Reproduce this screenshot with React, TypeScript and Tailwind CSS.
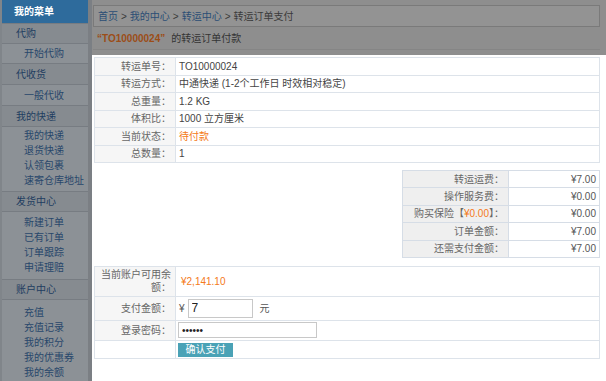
const font = "font-['Liberation_Sans','Noto_Sans_CJK_SC',sans-serif]";

function SideSection({ title, h = 20 }: { title: string; h?: number }) {
  return (
    <div
      className="flex items-center pl-[14px] bg-[#868b90] border-b border-[#777c82] text-[#1e3d60] text-[10px]"
      style={{ height: h }}
    >
      {title}
    </div>
  );
}

function SideList({ items, pt = 1, pb = 2 }: { items: string[]; pt?: number; pb?: number }) {
  return (
    <div
      className="border-b border-[#777c82] pl-[22px]"
      style={{ paddingTop: pt, paddingBottom: pb }}
    >
      {items.map((t) => (
        <div key={t} className="h-[15px] leading-[15px] text-[10px] text-[#28476b]">
          {t}
        </div>
      ))}
    </div>
  );
}

function Sidebar() {
  return (
    <div className="w-[92px] shrink-0 flex h-full">
      <div className="w-[88px] bg-[#8c9196] border-l-2 border-[#80858a]">
        <div className="h-[24px] bg-[#2e6b9c] flex items-center pl-[12px] text-white text-[10px] font-bold border-b border-[#777c82]">
          我的菜单
        </div>
        <SideSection title="代购" />
        <div className="h-[20px] flex items-center pl-[22px] border-b border-[#777c82] text-[10px] text-[#28476b]">
          开始代购
        </div>
        <SideSection title="代收货" h={21} />
        <div className="h-[21px] flex items-center pl-[22px] border-b border-[#777c82] text-[10px] text-[#28476b]">
          一般代收
        </div>
        <SideSection title="我的快递" h={21} />
        <SideList items={["我的快递", "退货快递", "认领包裹", "速寄仓库地址"]} pt={1} pb={3} />
        <SideSection title="发货中心" />
        <SideList items={["新建订单", "已有订单", "订单跟踪", "申请理赔"]} pt={3} pb={4} />
        <SideSection title="账户中心" />
        <SideList items={["充值", "充值记录", "我的积分", "我的优惠券", "我的余额"]} pt={5} pb={4} />
      </div>
      <div className="w-[4px] bg-[#7b7f84]" />
    </div>
  );
}

function InfoRow({ label, children }: { label: string; children: React.ReactNode }) {
  return (
    <tr className="h-[17.5px]">
      <td className="w-[81px] bg-[#f6f6f6] border border-[#dde3ea] text-right pr-[4px] text-[#666]">
        {label}
      </td>
      <td className="border border-[#dde3ea] pl-[3px] text-[#444]">{children}</td>
    </tr>
  );
}

function FeeRow({ label, value }: { label: React.ReactNode; value: string }) {
  return (
    <tr className="h-[17.4px]">
      <td className="w-[106px] bg-[#efefef] border border-[#d6dde6] text-right pr-[4px] text-[#666]">
        {label}
      </td>
      <td className="border border-[#d6dde6] text-right pr-[3px] text-[#555]">{value}</td>
    </tr>
  );
}

export default function App() {
  return (
    <div className={`w-[606px] h-[381px] flex overflow-hidden text-[10px] ${font}`}>
      <Sidebar />
      <div className="flex-1 flex flex-col">
        {/* header */}
        <div className="h-[55px] bg-[#8e8e8e] pt-[5px] pr-[6px] pl-px">
          <div className="h-[22px] border border-[#7a7a7a] bg-[#939393] flex items-center pl-[4px] text-[10px] text-[#3a3a3a]">
            <span className="text-[#2b4e75]">首页</span>
            <span className="mx-[3px]">&gt;</span>
            <span className="text-[#2b4e75]">我的中心</span>
            <span className="mx-[3px]">&gt;</span>
            <span className="text-[#2b4e75]">转运中心</span>
            <span className="mx-[3px]">&gt;</span>
            <span>转运订单支付</span>
          </div>
          <div className="h-[23px] flex items-center pl-[4px] border-b border-[#858585] text-[10px] text-[#333]">
            <span className="font-bold text-[#9c4d17]">“TO10000024”</span>
            <span className="ml-[6px]">的转运订单付款</span>
          </div>
        </div>

        {/* content */}
        <div className="flex-1 bg-white pl-[2px] pr-[6px] pt-[2px]">
          <table className="w-full border-collapse">
            <tbody>
              <InfoRow label="转运单号：">TO10000024</InfoRow>
              <InfoRow label="转运方式：">中通快递 (1-2个工作日 时效相对稳定)</InfoRow>
              <InfoRow label="总重量：">1.2 KG</InfoRow>
              <InfoRow label="体积比：">1000 立方厘米</InfoRow>
              <InfoRow label="当前状态：">
                <span className="text-[#f47a20]">待付款</span>
              </InfoRow>
              <InfoRow label="总数量：">1</InfoRow>
            </tbody>
          </table>

          <div className="flex justify-end mt-[7px]">
            <table className="w-[198px] border-collapse">
              <tbody>
                <FeeRow label="转运运费：" value="¥7.00" />
                <FeeRow label="操作服务费：" value="¥0.00" />
                <FeeRow
                  label={
                    <>
                      购买保险【<span className="text-[#f47a20]">¥0.00</span>】：
                    </>
                  }
                  value="¥0.00"
                />
                <FeeRow label="订单金额：" value="¥7.00" />
                <FeeRow label="还需支付金额：" value="¥7.00" />
              </tbody>
            </table>
          </div>

          <table className="w-full border-collapse mt-[8px]">
            <tbody>
              <tr className="h-[30px]">
                <td className="w-[81px] bg-[#f6f6f6] border border-[#dde3ea] text-right pr-[4px] text-[#666] leading-[13px]">
                  当前账户可用余
                  <br />
                  额：
                </td>
                <td className="border border-[#dde3ea] pl-[5px] text-[#f47a20] text-[10px]">¥2,141.10</td>
              </tr>
              <tr className="h-[24px]">
                <td className="bg-[#f6f6f6] border border-[#dde3ea] text-right pr-[4px] text-[#666]">支付金额：</td>
                <td className="border border-[#dde3ea] pl-[3px] text-[#555]">
                  <div className="flex items-center">
                    <span>¥</span>
                    <input
                      readOnly
                      value="7"
                      className="ml-[3px] w-[65px] h-[19px] border border-[#c8c8c8] px-[3px] text-[12px] text-[#222] outline-none"
                    />
                    <span className="ml-[7px] text-[10px]">元</span>
                  </div>
                </td>
              </tr>
              <tr className="h-[20px]">
                <td className="bg-[#f6f6f6] border border-[#dde3ea] text-right pr-[4px] text-[#666]">登录密码：</td>
                <td className="border border-[#dde3ea] pl-[2px]">
                  <input
                    readOnly
                    type="password"
                    value="123456"
                    className="block w-[139px] h-[16px] border border-[#c8c8c8] px-[3px] text-[10px] text-[#222] outline-none"
                  />
                </td>
              </tr>
              <tr className="h-[18px]">
                <td className="border border-[#dde3ea]" />
                <td className="border border-[#dde3ea] pl-[2px]">
                  <button className="h-[14px] w-[55px] bg-[#4aa2b6] text-white text-[10px] leading-[14px]">
                    确认支付
                  </button>
                </td>
              </tr>
            </tbody>
          </table>
        </div>
      </div>
    </div>
  );
}
